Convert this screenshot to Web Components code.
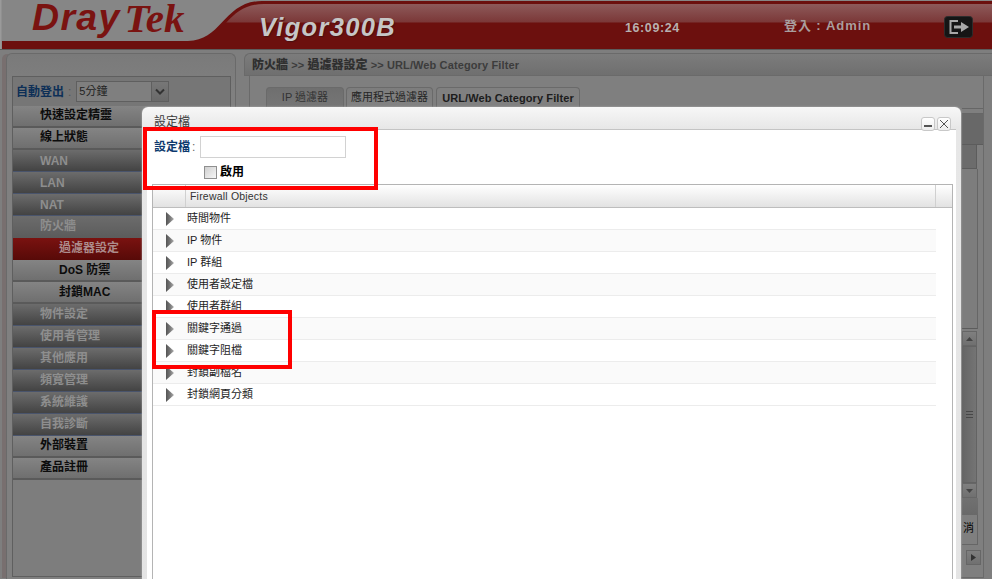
<!DOCTYPE html>
<html lang="zh-Hant"><head><meta charset="utf-8"><title>Vigor300B</title>
<style>
html,body{margin:0;padding:0;width:992px;height:579px;overflow:hidden;background:#7e7e7e}
body{font-family:"Liberation Sans","Noto Sans CJK TC",sans-serif}
</style></head>
<body>
<dv-app>
  <dv-header slot="header"></dv-header>
  <dv-sidebar slot="side">
    <dv-nav kind="light">快速設定精靈</dv-nav>
    <dv-nav kind="light">線上狀態</dv-nav>
    <dv-nav kind="dark" low>WAN</dv-nav>
    <dv-nav kind="dark" low>LAN</dv-nav>
    <dv-nav kind="dark" low>NAT</dv-nav>
    <dv-nav kind="dark" flat>防火牆</dv-nav>
    <dv-nav kind="active" sub>過濾器設定</dv-nav>
    <dv-nav kind="light" sub low>DoS 防禦</dv-nav>
    <dv-nav kind="light" sub low>封鎖MAC</dv-nav>
    <dv-nav kind="dark">物件設定</dv-nav>
    <dv-nav kind="dark">使用者管理</dv-nav>
    <dv-nav kind="dark">其他應用</dv-nav>
    <dv-nav kind="dark">頻寬管理</dv-nav>
    <dv-nav kind="dark">系統維護</dv-nav>
    <dv-nav kind="dark">自我診斷</dv-nav>
    <dv-nav kind="light">外部裝置</dv-nav>
    <dv-nav kind="light">產品註冊</dv-nav>
  </dv-sidebar>
  <dv-main slot="main">
    <dv-tab>IP 過濾器</dv-tab>
    <dv-tab second>應用程式過濾器</dv-tab>
    <dv-tab active>URL/Web Category Filter</dv-tab>
  </dv-main>
  <dv-modal slot="over">
    <dv-row>時間物件</dv-row>
    <dv-row tint>IP 物件</dv-row>
    <dv-row>IP 群組</dv-row>
    <dv-row tint>使用者設定檔</dv-row>
    <dv-row>使用者群組</dv-row>
    <dv-row tint>關鍵字通過</dv-row>
    <dv-row>關鍵字阻檔</dv-row>
    <dv-row tint>封鎖副檔名</dv-row>
    <dv-row>封鎖網頁分類</dv-row>
  </dv-modal>
  <dv-callout slot="over" style="left:143px;top:127px;width:235px;height:63px"></dv-callout>
  <dv-callout slot="over" style="left:152px;top:310px;width:140px;height:59px"></dv-callout>
</dv-app>
<template id="t-app"><style>
:host{display:block;position:relative;width:992px;height:579px;overflow:hidden;background:#7e7e7e}
.body{display:flex;height:529px;padding-left:6px;gap:8px;box-sizing:border-box}
</style><slot name="header"></slot><div class="body"><slot name="side"></slot><slot name="main"></slot></div><slot name="over"></slot></template>

<template id="t-header"><style>
:host{display:block;position:relative;height:49px;background:#868686;border-bottom:1px solid #5c5c5c;box-sizing:content-box}
svg{position:absolute;inset:0}
.row{position:relative;display:flex;height:49px;align-items:flex-start}
.logo{display:flex;margin:0 0 0 32px;width:227px;color:#7a1311;height:38px}
.dray{font:italic bold 37.500px/34px "Liberation Sans",sans-serif;letter-spacing:1.300px}
.tek{font:italic bold 41px/34px "Liberation Serif",serif;margin-left:4px;margin-top:1px;height:34px}
.model{font:italic bold 25.500px/30px "Liberation Sans",sans-serif;letter-spacing:1.300px;color:#c6c6c6;margin-top:12px;width:366px;text-shadow:1px 1px 1px #4a1010}
.time{font:bold 12.500px/16px "Liberation Sans",sans-serif;color:#b7b0b0;margin-top:20px;width:159px;letter-spacing:.6px}
.user{font:bold 13px/16px "Liberation Sans","Noto Sans CJK TC",sans-serif;color:#a99e9e;margin-top:18px;width:160px;letter-spacing:.9px}
.exit{margin-top:16px;display:block;position:relative}
</style>
<svg width="992" height="49" viewBox="0 0 992 49">
<defs><linearGradient id="g" x1="0" y1="0" x2="0" y2="1"><stop offset="0" stop-color="#8d5a5a"/><stop offset="1" stop-color="#7a3636"/></linearGradient></defs>
<path d="M2 49V41H188C222 41 224 1 262 1H992V49Z" fill="#6c100e"/>
<path d="M226 23C236 12 246 4 264 4H992V22.500H226Z" fill="url(#g)"/>
<rect x="0" y="0" width="1.500" height="49" fill="#9a9a9a"/>
</svg>
<div class="row">
<div class="logo"><span class="dray">Dray</span><span class="tek">Tek</span></div>
<div class="model">Vigor300B</div>
<div class="time">16:09:24</div>
<div class="user">登入 : Admin</div>
<svg class="exit" width="30" height="23" viewBox="0 0 30 23"><rect x=".5" y=".5" width="28" height="21" rx="3" fill="#151515" stroke="#2c2c2c"/><path d="M14 5H6.500V17H14" fill="none" stroke="#a8a8a8" stroke-width="2"/><path d="M10 9.500H17V6L25 11 17 16V12.500H10Z" fill="#a8a8a8"/></svg>
</div></template>

<template id="t-side"><style>
:host{display:block;flex:none;width:230px;margin-top:3px;box-sizing:border-box;height:526px;border:1px solid #6a6a6a;border-bottom:0;border-radius:6px 6px 0 0;padding:22px 4px 0 5px;background:linear-gradient(#7a7a7a,#808080 40px);box-shadow:-5px 0 0 -1px #786f6f}
.box{border:1px solid #5f5f5f;height:501px;box-sizing:border-box;background:#7d7d7d}
.auto{height:29px;display:flex;align-items:center;padding-left:3px;background:#767676;box-sizing:border-box;font:bold 12px/14px "Liberation Sans","Noto Sans CJK TC",sans-serif;color:#0d2f57}
.colon{color:#555;font-weight:400;margin:0 5px 0 4px}
.sel{display:flex;width:93px;height:21px;box-sizing:border-box;border:1px solid #5f5f5f;background:#7f7f7f;color:#222;font:400 11px/19px "Liberation Sans","Noto Sans CJK TC",sans-serif;padding-left:2px}
.sel span{flex:1}
.sel i{display:flex;align-items:center;justify-content:center;width:16px;background:linear-gradient(#777,#6a6a6a);border-left:1px solid #5f5f5f}
</style>
<div class="box"><div class="auto"><span>自動登出</span><span class="colon">:</span><div class="sel"><span>5分鐘</span><i><svg width="10" height="7" viewBox="0 0 10 7"><path d="M1 1.500L5 5.500 9 1.500" fill="none" stroke="#333" stroke-width="2"/></svg></i></div></div><slot></slot></div></template>

<template id="t-nav"><style>
:host{display:block;height:22px;box-sizing:border-box;padding-left:27px;font:bold 12px/19px "Liberation Sans","Noto Sans CJK TC",sans-serif;color:#0c0c0c;background:linear-gradient(#848484,#6f6f6f);border-bottom:2px solid #5a5a5a}
:host([kind=dark]){background:linear-gradient(#6c6c6c,#434343);color:#8e8e8e;border-bottom:1px solid #49546c;line-height:21px}
:host([flat]){background:linear-gradient(#6c6c6c,#5c5c5c);border-bottom-color:#5c5c5c}
:host([kind=active]){background:linear-gradient(#7a1210,#570a08);color:#ad8c8c;border-bottom:0;line-height:20px}
:host([sub]){padding-left:46px}
:host([low]){padding-top:1px}
</style><slot></slot></template>

<template id="t-main"><style>
:host{display:block;flex:1;min-width:0;margin-top:3px;font-family:"Liberation Sans","Noto Sans CJK TC",sans-serif}
.crumb{height:23px;box-sizing:border-box;border:1px solid #6a6a6a;border-width:1px 0 1px 1px;border-radius:6px 0 0 0;background:linear-gradient(#7c7c7c,#6f6f6f);padding-left:7px;font:bold 11px/22px "Liberation Sans","Noto Sans CJK TC",sans-serif;color:#3c3c3c;white-space:nowrap;letter-spacing:.12px}
.crumb b{font-size:12px;color:#2f2f2f;letter-spacing:0}
.frame{margin:0 8px 0 5px;height:502px;box-sizing:border-box;border:1px solid #6a6a6a;border-width:0 1px 1px;padding-top:11px;display:flex;flex-direction:column;background:#7f7f7f}
.tabs{display:flex;gap:2px;padding-left:16px;height:21px;flex:none}
dv-strip{align-self:flex-end}
</style>
<div class="crumb"><b>防火牆</b> &gt;&gt; <b>過濾器設定</b> &gt;&gt; URL/Web Category Filter</div>
<div class="frame"><div class="tabs"><slot></slot></div><dv-strip></dv-strip></div></template>

<template id="t-tab"><style>
:host{display:block;height:21px;box-sizing:border-box;border:1px solid #6a6a6a;border-bottom:0;border-radius:4px 4px 0 0;font:11px/18px "Liberation Sans","Noto Sans CJK TC",sans-serif;color:#252525;background:linear-gradient(#7d7d7d,#828282);white-space:nowrap;text-align:center}
:host(:first-child){width:78px;background:linear-gradient(#6f6f6f,#767676);color:#333}
:host([second]){width:87px}
:host([active]){font-weight:700;background:#808080;line-height:20px;width:144px;color:#1c1c1c;letter-spacing:.1px;margin-left:1px}
</style><slot></slot></template>

<template id="t-strip"><style>
:host{display:flex;flex-direction:column;width:21px;flex:none;font:11px/14px "Liberation Sans","Noto Sans CJK TC",sans-serif;color:#000}
div{box-sizing:border-box}
.a{height:6px;border-top:1px solid #666;border-bottom:1px solid #666}
.b{height:31px;background:#686868;border-bottom:1px solid #5c5c5c}
.c{height:24px;width:15px;background:#6c6c6c;border-bottom:1px solid #5c5c5c;border-right:1px solid #5c5c5c}
.d{height:160px;width:16px;border-right:1px solid #666;border-bottom:1px solid #5c5c5c;background:#7d7d7d}
.s{width:15px;height:167px;margin-top:2px;display:flex;flex-direction:column;background:#707070}
.btn{height:15px;flex:none;background:linear-gradient(#7f7f7f,#707070);border:1px solid #666;display:flex;align-items:center;justify-content:center}
.tr{flex:1;border:1px solid #636363;background:linear-gradient(90deg,#666,#747474);display:flex;align-items:center;justify-content:center}
.e{height:17px;width:16px;background:linear-gradient(#717171,#696969)}
.f{height:30px;width:16px;background:#7f7f7f;border-right:1px solid #666;border-bottom:1px solid #666;padding:6px 0 0 1px;overflow:hidden}
.g{flex:none;width:21px;height:27px;padding:5px 0 0 4px;display:flex}
.h{width:15px;height:15px;background:linear-gradient(#7f7f7f,#707070);border:1px solid #666;display:flex;align-items:center;justify-content:center}
</style>
<div class="a"></div><div class="b"></div><div class="c"></div><div class="d"></div>
<div class="s"><div class="btn"><svg width="7" height="4"><path d="M0 4L3.500 0 7 4Z" fill="#444"/></svg></div><div class="tr"><svg width="7" height="7"><path d="M0 .5H7M0 3.500H7M0 6.500H7" stroke="#484848"/></svg></div><div class="btn"><svg width="7" height="4"><path d="M0 0L3.500 4 7 0Z" fill="#444"/></svg></div></div>
<div class="e"></div><div class="f">消</div>
<div class="g"><div class="h"><svg width="5" height="7"><path d="M0 0L5 3.500 0 7Z" fill="#333"/></svg></div></div></template>

<template id="t-modal"><style>
:host{position:absolute;display:block;left:142px;top:107px;width:819px;height:520px;box-sizing:border-box;border-radius:6px 6px 0 0;background:linear-gradient(#f7f7f7,#e7e7e7 22px,#e4e4e4);padding:0 5px;font-family:"Liberation Sans","Noto Sans CJK TC",sans-serif;box-shadow:0 0 2px #bbb}
.title{height:22px;position:relative;font:12px/31px "Liberation Sans","Noto Sans CJK TC",sans-serif;color:#3a3a3a;padding-left:7px;display:flex;justify-content:space-between}
.btns{display:flex;gap:2px;margin:10px 5px 0 0;height:14px}
.btn{width:14px;height:14px;box-sizing:border-box;border:1px solid #c8c8c8;border-radius:3px;background:linear-gradient(#fff,#eee);display:flex;align-items:center;justify-content:center}
.content{background:#fff;border-top:1px solid #c4c4c4;height:498px;box-sizing:border-box;padding:6px 4px 0 5px}
.f1{display:flex;align-items:center;height:22px;margin-left:2px;font:bold 12px/14px "Liberation Sans","Noto Sans CJK TC",sans-serif;color:#0d3a6e}
.f1 i{font-style:normal;font-weight:400;color:#666;margin:0 5px 0 2px}
.inp{width:146px;height:22px;box-sizing:border-box;border:1px solid #d2d2d2;background:#fff}
.f2{display:flex;align-items:center;height:13px;margin:8px 0 0 52px;gap:3px;font:bold 12px/13px "Liberation Sans","Noto Sans CJK TC",sans-serif;color:#000}
.cb{width:13px;height:13px;box-sizing:border-box;border:1px solid #8f8f8f;background:linear-gradient(135deg,#cfcfcf,#f7f7f7)}
.grid{margin-top:5px;border:1px solid #b4b4b4;border-bottom:0;height:400px;box-sizing:border-box;border-width:1px 1px 0 1px;margin-right:-1px}
.head{display:flex;height:23px;box-sizing:border-box;border-bottom:1px solid #bdbdbd;background:linear-gradient(#fff,#e2e2e2);font:10.500px/22px "Liberation Sans",sans-serif;color:#333;letter-spacing:.2px}
.head div{box-sizing:border-box}
.h1{width:33px;border-right:1px solid #d0d0d0}
.h2{width:750px;padding-left:4px;border-right:1px solid #d0d0d0}
.rows{width:783px}
</style>
<div class="title"><span>設定檔</span><div class="btns"><div class="btn"><svg width="8" height="8"><path d="M0 6H8" stroke="#555" stroke-width="2"/></svg></div><div class="btn"><svg width="10" height="10"><path d="M1 1L9 9M9 1L1 9" stroke="#555" fill="none"/></svg></div></div></div>
<div class="content">
<div class="f1"><span>設定檔</span><i>:</i><div class="inp"></div></div>
<div class="f2"><div class="cb"></div><span>啟用</span></div>
<div class="grid"><div class="head"><div class="h1"></div><div class="h2">Firewall Objects</div></div><div class="rows"><slot></slot></div></div>
</div></template>

<template id="t-row"><style>
:host{display:flex;align-items:center;height:22px;box-sizing:border-box;border-bottom:1px solid #ececec;font:11px/21px "Liberation Sans","Noto Sans CJK TC",sans-serif;color:#1e1e1e;background:#fff;padding-left:13px}
:host([tint]){background:#fafafa}
svg{margin-right:13px;flex:none}
</style><svg width="8" height="14" viewBox="0 0 8 14"><defs><linearGradient id="a" x1="0" x2="1" y1="0" y2="0"><stop offset="0" stop-color="#555"/><stop offset=".5" stop-color="#777"/><stop offset="1" stop-color="#b0b0b0"/></linearGradient></defs><path d="M0 0L8 7 0 14Z" fill="url(#a)"/></svg><slot></slot></template>

<template id="t-callout"><style>
:host{position:absolute;display:block;box-sizing:border-box;border:4.500px solid #f00;pointer-events:none}
</style></template>

<script>
const reg=(name,tid)=>customElements.define(name,class extends HTMLElement{
  constructor(){super();this.attachShadow({mode:'open'}).appendChild(document.getElementById(tid).content.cloneNode(true));}
});
[['dv-app','t-app'],['dv-header','t-header'],['dv-sidebar','t-side'],['dv-nav','t-nav'],['dv-main','t-main'],['dv-tab','t-tab'],['dv-strip','t-strip'],['dv-modal','t-modal'],['dv-row','t-row'],['dv-callout','t-callout']].forEach(p=>reg(p[0],p[1]));
</script>
</body></html>
